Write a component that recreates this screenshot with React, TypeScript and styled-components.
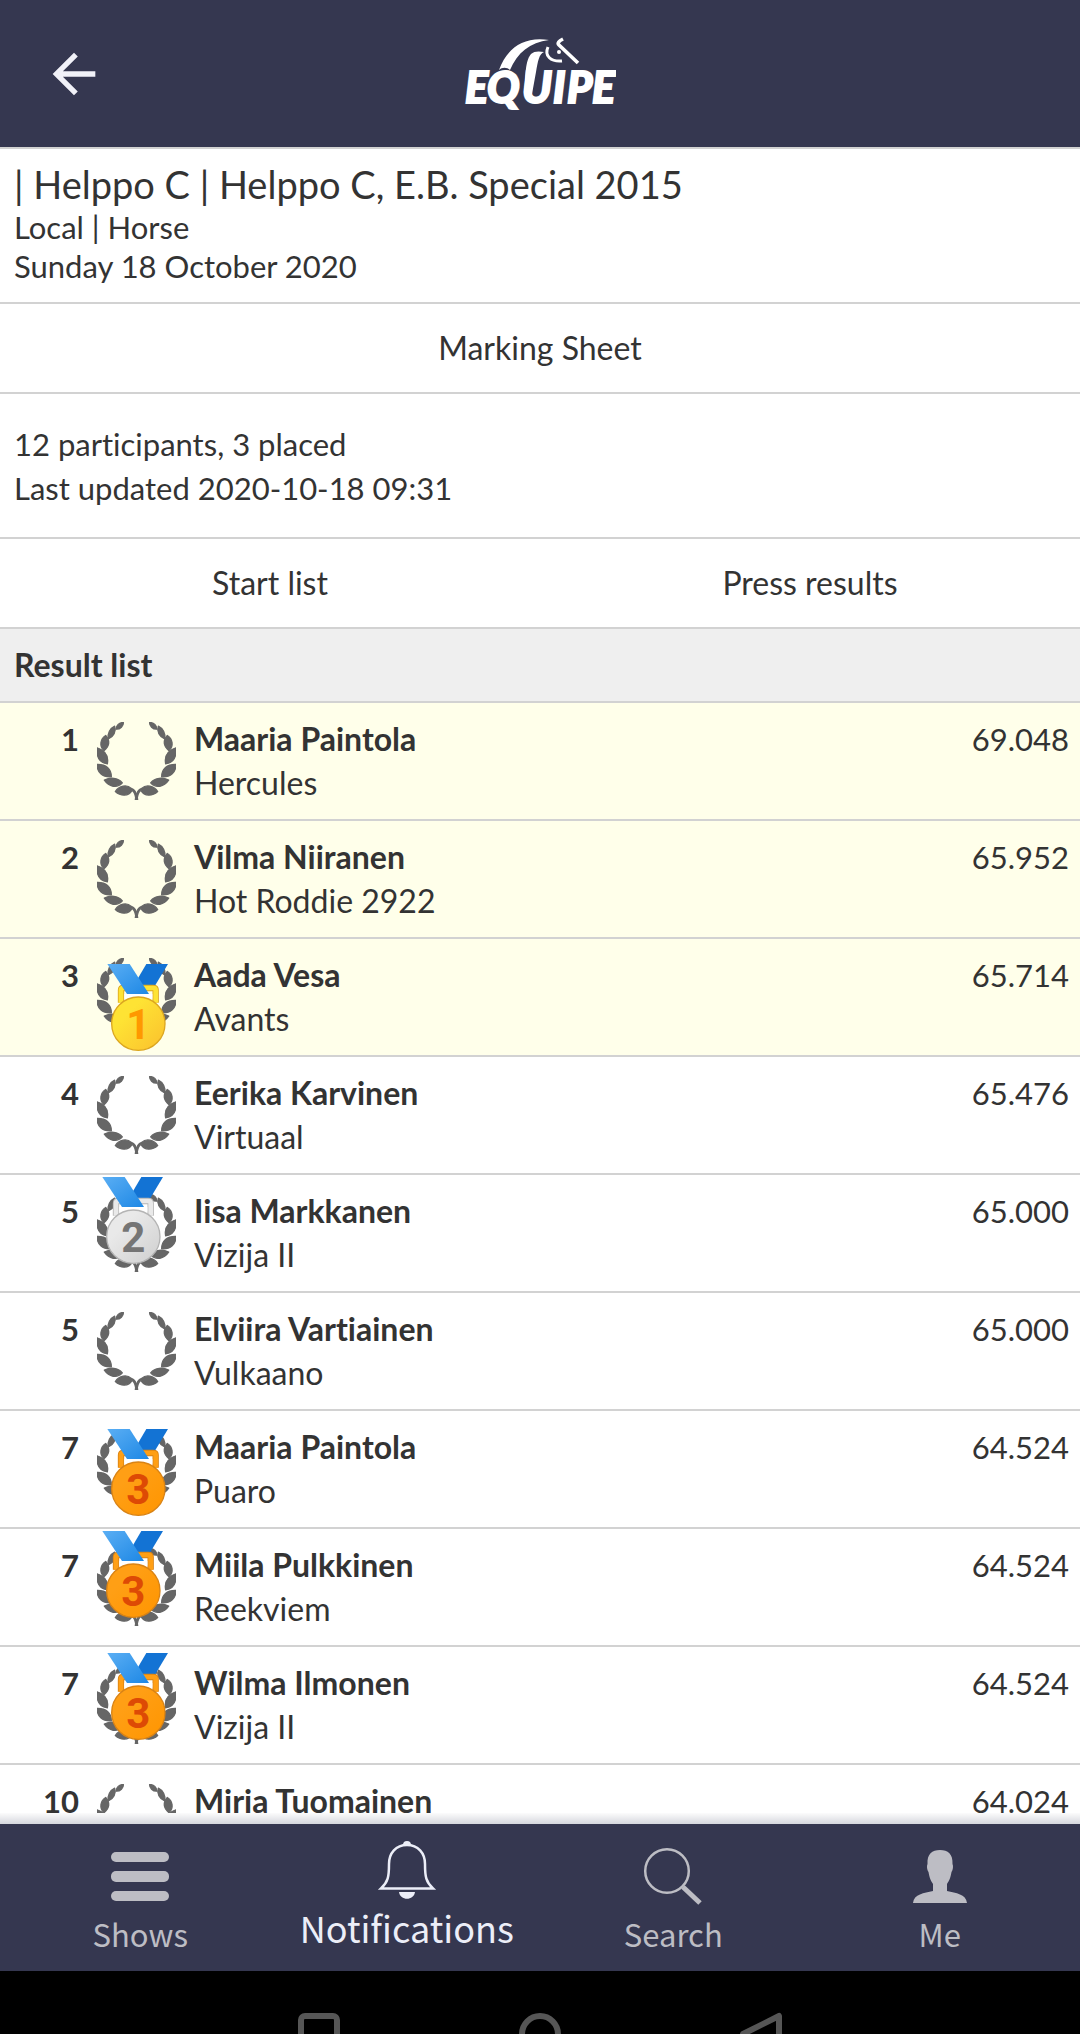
import React from "react";
import styled, { createGlobalStyle } from "styled-components";

const color = {
  navy: "#353750",
  line: "#d2d2d2",
  text: "#333333",
  placed: "#ffffea",
  band: "#efefef",
  muted: "#bdbdc4",
  active: "#eceef8",
};

const GlobalStyle = createGlobalStyle`
  * { box-sizing: border-box; }
  html, body { margin: 0; }
  body {
    background: #fff;
    color: ${color.text};
    font-family: Lato, "Open Sans", sans-serif;
    font-size: 31px;
    font-variant-ligatures: no-common-ligatures;
    line-height: 44px;
  }
`;

const Shell = styled.div`
  display: flex;
  flex-direction: column;
  height: 100vh;
  overflow: hidden;
`;

const TopBar = styled.header`
  display: grid;
  grid-template-columns: 1fr auto 1fr;
  align-items: center;
  flex: none;
  height: 149px;
  padding: 0 42px;
  background: ${color.navy};
  border-bottom: 2px solid ${color.line};
`;

const BackButton = styled.button`
  display: flex;
  justify-self: start;
  padding: 0;
  border: 0;
  background: none;
  color: #f1f1f8;
`;

const Scroller = styled.main`
  position: relative;
  flex: 1;
  min-height: 0;
  overflow: hidden;

  &::after {
    content: "";
    position: absolute;
    right: 0;
    bottom: 0;
    left: 0;
    height: 11px;
    background: linear-gradient(#fcfcfc, #d6d7de);
  }
`;

const Heading = styled.section`
  padding: 11px 14px 16px;
  border-bottom: 2px solid ${color.line};
  line-height: 39px;
`;

const Title = styled.h1`
  margin: 0;
  font-size: 38px;
  font-weight: 400;
  line-height: 48px;
`;

const Line = styled.p`
  margin: 0;
`;

const Summary = styled.section`
  padding: 28px 14px 27px;
  border-bottom: 2px solid ${color.line};
`;

const LinkRow = styled.nav`
  display: flex;
  border-bottom: 2px solid ${color.line};
`;

const RowLink = styled.a`
  flex: 1;
  padding: 22px 12px;
  color: inherit;
  font-size: 32px;
  text-align: center;
  text-decoration: none;
`;

const Results = styled.table`
  width: 100%;
  border-spacing: 0;
`;

const Caption = styled.caption`
  padding: 14px;
  background: ${color.band};
  border-bottom: 2px solid ${color.line};
  font-size: 32px;
  font-weight: 700;
  text-align: left;
`;

const Row = styled.tr<{ $placed: boolean }>`
  background: ${(p) => (p.$placed ? color.placed : "#fff")};
`;

const Cell = styled.td`
  padding: 14px 0;
  border-bottom: 2px solid ${color.line};
  vertical-align: top;
`;

const Rank = styled(Cell)`
  width: 80px;
  padding-right: 1px;
  font-weight: 700;
  text-align: right;
`;

const Badge = styled(Cell)`
  position: relative;
  width: 114px;
  padding: 19px 18px 0 17px;
`;

const Entry = styled(Cell)`
  font-size: 32px;
`;

const Score = styled(Cell)`
  padding-right: 11px;
  text-align: right;
`;

const Rider = styled.div`
  font-weight: 700;
`;

const MedalSvg = styled.svg<{ $x: number; $y: number }>`
  position: absolute;
  top: ${(p) => p.$y}px;
  left: ${(p) => p.$x}px;
`;

const WreathSvg = styled.svg`
  display: block;
`;

const TabBar = styled.nav`
  display: flex;
  flex: none;
  height: 147px;
  padding: 0 7px;
  background: ${color.navy};
`;

const Tab = styled.a<{ $active?: boolean }>`
  display: flex;
  flex: 1;
  flex-direction: column;
  align-items: center;
  gap: 4px;
  padding-top: ${(p) => (p.$active ? 13 : 20)}px;
  color: ${(p) => (p.$active ? color.active : color.muted)};
  font-family: "Noto Sans CJK SC", "Open Sans", sans-serif;
  font-size: ${(p) => (p.$active ? 36 : 31)}px;
  font-variant-ligatures: normal;
  text-decoration: none;
`;

const SystemBar = styled.footer`
  display: flex;
  flex: none;
  justify-content: center;
  gap: 177px;
  height: 63px;
  padding-top: 41px;
  overflow: hidden;
  background: #000;
`;

const SystemButton = styled.button`
  display: block;
  flex: none;
  width: 44px;
  height: 44px;
  padding: 0;
  border: 0;
  background: none;
  color: #565656;
`;

function Logo() {
  return (
    <svg width="152" height="80" viewBox="0 0 152 80" role="img" aria-label="Equipe" fill="#fff">
      <text
        y="69"
        x="1 23 58 89 103 128"
        fontFamily="Lato, sans-serif"
        fontWeight="900"
        fontStyle="italic"
        fontSize="43"
        stroke="#fff"
        strokeWidth="2"
      >
        EQUIPE
      </text>
      <path d="M35 36 C43 14 60 2 85 6 C66 8 53 19 46 36 C43 33 38 33 35 36Z" />
      <path d="M60 60 C62 48 60 28 67 20 C70 17 75 17 80 18 C75 20 74 27 72 38 L68 60Z" />
      <path d="M84 13 C80 22 87 28 98 27" fill="none" stroke="#fff" strokeWidth="3" />
      <path d="M99 5 C95 7 93 9 95 11 L114 29" fill="none" stroke="#fff" strokeWidth="3.600" />
      <circle cx="95" cy="18" r="2" />
    </svg>
  );
}

function Leaves() {
  return (
    <>
      <path d="M57 21 C58 10 66 1 79 1 C80 11 70 22 57 21Z" />
      <path d="M34 50 C30 35 40 18 53 12 C58 28 50 44 34 50Z" />
      <path d="M21 86 C6 72 10 50 26 40 C40 55 38 72 21 86Z" />
      <path d="M31 125 C8 122 -2 108 0 77 C22 84 36 98 31 125Z" />
      <path d="M43 164 C16 166 0 150 0 127 C27 126 43 140 43 164Z" />
      <path d="M76 182 C60 200 36 194 22 174 C40 165 62 166 76 182Z" />
      <path d="M55 208 C66 190 90 186 103 199 C112 201 119 210 122 232 L117 232 C115 218 112 208 105 205 C95 224 70 222 55 208Z" />
    </>
  );
}

function Wreath() {
  return (
    <WreathSvg width="79" height="78" viewBox="0 0 237 233" fill="#666" stroke="#666" strokeWidth="4" strokeLinejoin="round" aria-hidden="true">
      <Leaves />
      <g transform="translate(237 0) scale(-1 1)">
        <Leaves />
      </g>
    </WreathSvg>
  );
}

type MedalKind = 1 | 2 | 3;

const metals: Record<MedalKind, { light: string; base: string; rim: string; digit: string }> = {
  1: { light: "#fee334", base: "#fbc02d", rim: "#dca61f", digit: "#ff9800" },
  2: { light: "#e9e9e9", base: "#cfcfcf", rim: "#b4b4b4", digit: "#757575" },
  3: { light: "#ff9f15", base: "#ff9500", rim: "#d98315", digit: "#dd4a05" },
};

function Medal({ kind, x, y }: { kind: MedalKind; x: number; y: number }) {
  const metal = metals[kind];
  const id = `metal-${kind}`;
  return (
    <MedalSvg $x={x} $y={y} width="62" height="88" viewBox="0 0 186 264">
      <defs>
        <linearGradient id={id} x1="0" y1="0" x2="1" y2="1">
          <stop offset="0.300" stopColor={metal.light} />
          <stop offset="1" stopColor={metal.base} />
        </linearGradient>
        <linearGradient id="ribbon" x1="0" y1="0" x2="1" y2="1">
          <stop offset="0" stopColor="#5aaef4" />
          <stop offset="1" stopColor="#1e88e5" />
        </linearGradient>
      </defs>
      <path d="M118 0 H183 L142 68 H78Z" fill="#1373d4" />
      <path d="M42 116 V78 Q42 72 49 72 H139 Q146 72 146 78 V116" fill="none" stroke={metal.rim} strokeWidth="19" />
      <path d="M42 116 V78 Q42 72 49 72 H139 Q146 72 146 78 V116" fill="none" stroke={metal.light} strokeWidth="14" />
      <path d="M52 90 H136 V104 H52Z" fill="#fff" />
      <path d="M1 0 H68 L126 90 H60Z" fill="url(#ribbon)" />
      <circle cx="94" cy="179" r="80" fill={`url(#${id})`} stroke={metal.rim} strokeWidth="4" />
      <text x="94" y="224" fill={metal.digit} fontFamily="Roboto, sans-serif" fontWeight="700" fontSize="126" textAnchor="middle">
        {kind}
      </text>
    </MedalSvg>
  );
}

interface Result {
  rank: number;
  rider: string;
  horse: string;
  score: string;
  placed?: boolean;
  medal?: { kind: MedalKind; x: number; y: number };
}

const results: Result[] = [
  { rank: 1, rider: "Maaria Paintola", horse: "Hercules", score: "69.048", placed: true },
  { rank: 2, rider: "Vilma Niiranen", horse: "Hot Roddie 2922", score: "65.952", placed: true },
  { rank: 3, rider: "Aada Vesa", horse: "Avants", score: "65.714", placed: true, medal: { kind: 1, x: 27, y: 25 } },
  { rank: 4, rider: "Eerika Karvinen", horse: "Virtuaal", score: "65.476" },
  { rank: 5, rider: "Iisa Markkanen", horse: "Vizija II", score: "65.000", medal: { kind: 2, x: 22, y: 2 } },
  { rank: 5, rider: "Elviira Vartiainen", horse: "Vulkaano", score: "65.000" },
  { rank: 7, rider: "Maaria Paintola", horse: "Puaro", score: "64.524", medal: { kind: 3, x: 27, y: 18 } },
  { rank: 7, rider: "Miila Pulkkinen", horse: "Reekviem", score: "64.524", medal: { kind: 3, x: 22, y: 2 } },
  { rank: 7, rider: "Wilma Ilmonen", horse: "Vizija II", score: "64.524", medal: { kind: 3, x: 27, y: 6 } },
  { rank: 10, rider: "Mirja Tuomainen", horse: "", score: "64.024" },
];

export default function App() {
  return (
    <Shell>
      <GlobalStyle />
      <TopBar>
        <BackButton type="button" aria-label="Back">
          <svg width="64" height="64" viewBox="0 0 24 24" fill="currentColor">
            <path d="M20 11H7.830l5.590-5.590L12 4l-8 8 8 8 1.410-1.410L7.830 13H20v-2z" />
          </svg>
        </BackButton>
        <Logo />
      </TopBar>

      <Scroller>
        <Heading>
          <Title>| Helppo C | Helppo C, E.B. Special 2015</Title>
          <Line>Local | Horse</Line>
          <Line>Sunday 18 October 2020</Line>
        </Heading>
        <LinkRow>
          <RowLink href="#marking-sheet">Marking Sheet</RowLink>
        </LinkRow>
        <Summary>
          <Line>12 participants, 3 placed</Line>
          <Line>Last updated 2020-10-18 09:31</Line>
        </Summary>
        <LinkRow>
          <RowLink href="#start-list">Start list</RowLink>
          <RowLink href="#press-results">Press results</RowLink>
        </LinkRow>
        <Results>
          <Caption>Result list</Caption>
          <tbody>
            {results.map((r) => (
              <Row key={r.rider + r.horse} $placed={Boolean(r.placed)}>
                <Rank>{r.rank}</Rank>
                <Badge>
                  <Wreath />
                  {r.medal && <Medal {...r.medal} />}
                </Badge>
                <Entry>
                  <Rider>{r.rider}</Rider>
                  <div>{r.horse}</div>
                </Entry>
                <Score>{r.score}</Score>
              </Row>
            ))}
          </tbody>
        </Results>
      </Scroller>

      <TabBar>
        <Tab href="#shows">
          <svg width="64" height="64" viewBox="0 0 64 64" fill="currentColor" aria-hidden="true">
            <rect x="3" y="8" width="58" height="10" rx="5" />
            <rect x="3" y="27" width="58" height="11" rx="5" />
            <rect x="3" y="47" width="58" height="10" rx="5" />
          </svg>
          Shows
        </Tab>
        <Tab href="#notifications" $active>
          <svg width="64" height="64" viewBox="0 0 64 64" aria-hidden="true">
            <path
              d="M32 8 C43 8 50 16 50 27 C50 40 51 45 58 51.500 H6 C13 45 14 40 14 27 C14 16 21 8 32 8Z"
              fill="none"
              stroke="currentColor"
              strokeWidth="2.500"
            />
            <path d="M28 8 a4 4 0 0 1 8 0Z M24 55 H40 C39 64 25 64 24 55Z" fill="currentColor" />
          </svg>
          Notifications
        </Tab>
        <Tab href="#search">
          <svg width="64" height="64" viewBox="0 0 64 64" fill="none" stroke="currentColor" aria-hidden="true">
            <circle cx="26" cy="27" r="21.800" strokeWidth="2.500" />
            <path d="M42 43 L59 59" strokeWidth="5" />
          </svg>
          Search
        </Tab>
        <Tab href="#me">
          <svg width="64" height="64" viewBox="0 0 64 64" fill="currentColor" aria-hidden="true">
            <path d="M32 6 C40 6 45 10 44.500 20 C45.500 22 45 26 43.500 28 C42.500 34 41 37 39 40 V47 C48 49 58 50 59 59 H5 C6 50 16 49 25 47 V40 C23 37 21.500 34 20.500 28 C19 26 18.500 22 19.500 20 C19 10 24 6 32 6Z" />
          </svg>
          Me
        </Tab>
      </TabBar>

      <SystemBar>
        <SystemButton type="button" aria-label="Recent apps">
          <svg width="44" height="44" viewBox="0 0 44 44" fill="none" stroke="currentColor" strokeWidth="6">
            <rect x="4" y="4" width="36" height="36" rx="4" />
          </svg>
        </SystemButton>
        <SystemButton type="button" aria-label="Home">
          <svg width="44" height="44" viewBox="0 0 44 44" fill="none" stroke="currentColor" strokeWidth="6">
            <circle cx="22" cy="22" r="18" />
          </svg>
        </SystemButton>
        <SystemButton type="button" aria-label="Back">
          <svg width="44" height="44" viewBox="0 0 44 44" fill="none" stroke="currentColor" strokeWidth="6" strokeLinejoin="round">
            <path d="M40 4 V40 L4 22Z" />
          </svg>
        </SystemButton>
      </SystemBar>
    </Shell>
  );
}
